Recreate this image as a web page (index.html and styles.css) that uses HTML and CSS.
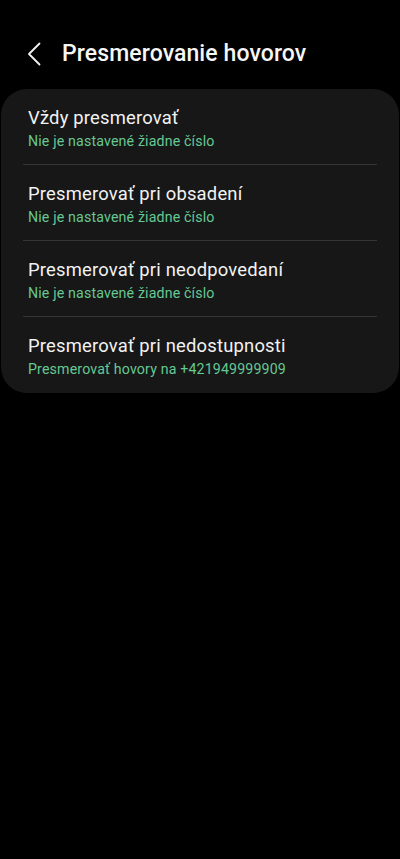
FILE: index.html
```html
<!DOCTYPE html>
<html lang="sk">
<head>
<meta charset="utf-8">
<title>Presmerovanie hovorov</title>
<link rel="stylesheet" href="styles.css">
</head>
<body>
<header class="appbar">
  <button class="back" aria-label="Späť">
    <svg width="14" height="24" viewBox="0 0 14 24"><polyline points="12.5,1.5 2,12 12.5,22.5" fill="none" stroke="#f2f2f2" stroke-width="1.8" stroke-linecap="round" stroke-linejoin="round"/></svg>
  </button>
  <h1 class="title">Presmerovanie hovorov</h1>
</header>
<main class="card">
  <div class="row">
    <div class="row-title">Vždy presmerovať</div>
    <div class="row-sub">Nie je nastavené žiadne číslo</div>
  </div>
  <div class="divider"></div>
  <div class="row">
    <div class="row-title">Presmerovať pri obsadení</div>
    <div class="row-sub">Nie je nastavené žiadne číslo</div>
  </div>
  <div class="divider"></div>
  <div class="row">
    <div class="row-title">Presmerovať pri neodpovedaní</div>
    <div class="row-sub">Nie je nastavené žiadne číslo</div>
  </div>
  <div class="divider"></div>
  <div class="row row-last">
    <div class="row-title">Presmerovať pri nedostupnosti</div>
    <div class="row-sub">Presmerovať hovory na +421949999909</div>
  </div>
</main>
</body>
</html>
```
FILE: styles.css
```css
html, body {
  margin: 0;
  padding: 0;
  background: #000;
  height: 100%;
}
body {
  font-family: Roboto, "Noto Sans", sans-serif;
  color: #f4f4f4;
}
.appbar {
  display: flex;
  align-items: center;
  height: 89px;
  box-sizing: border-box;
  padding: 39px 0 21px 27px;
}
.back {
  display: flex;
  align-items: center;
  justify-content: center;
  width: 14px;
  height: 29px;
  padding: 0;
  border: 0;
  background: none;
  margin-right: 21px;
}
.title {
  margin: 0;
  font-size: 23px;
  font-weight: 500;
  line-height: 29px;
  letter-spacing: 0.1px;
  color: #f6f6f6;
}
.card {
  margin: 0 1px;
  background: #171717;
  border-radius: 26px;
  overflow: hidden;
}
.row {
  height: 75px;
  box-sizing: border-box;
  padding: 17px 26px 13px 27px;
}
.row-last {
  height: 76px;
}
.row-title {
  font-size: 18.4px;
  line-height: 24px;
  letter-spacing: 0.2px;
  color: #f2f2f2;
}
.row-sub {
  margin-top: 1px;
  font-size: 14.2px;
  line-height: 20px;
  letter-spacing: 0.15px;
  color: #66c893;
}
.divider {
  height: 1px;
  margin: 0 22px;
  background: #353535;
}
```
